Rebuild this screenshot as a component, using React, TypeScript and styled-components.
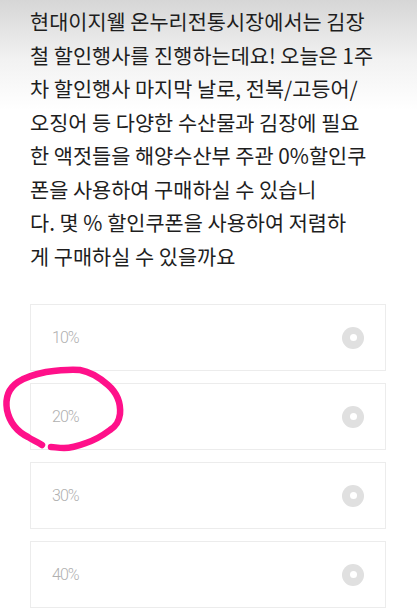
import React from "react";
import styled, { createGlobalStyle } from "styled-components";

const Global = createGlobalStyle`
  html, body {
    margin: 0;
    padding: 0;
    background: #ffffff;
  }
  body {
    font-family: "Noto Sans CJK KR", "Noto Sans", sans-serif;
  }
`;

const Page = styled.div`
  position: relative;
  width: 417px;
  height: 612px;
  overflow: hidden;
  background: linear-gradient(to bottom, #d6d6d6 0px, #f2f2f2 60px, #ffffff 110px);
  display: flex;
  flex-direction: column;
  padding: 5px 30px 0 30px;
  box-sizing: border-box;
`;

const Question = styled.p`
  margin: 0;
  font-family: "Noto Sans CJK KR", sans-serif;
  font-size: 20.8px;
  line-height: 33.5px;
  color: #1e1e1e;
  white-space: nowrap;
  letter-spacing: 0px;
`;

const Options = styled.div`
  margin-top: 31px;
  display: flex;
  flex-direction: column;
  gap: 12px;
  width: 356px;
`;

const Option = styled.div`
  height: 67px;
  box-sizing: border-box;
  border: 1px solid #ececec;
  background: #ffffff;
  display: flex;
  align-items: center;
  justify-content: space-between;
  padding: 0 21px 0 21px;
`;

const Label = styled.span`
  font-family: Roboto, "Noto Sans", sans-serif;
  font-weight: 300;
  font-size: 16px;
  letter-spacing: -1px;
  color: #b0b0b0;
`;

const Radio = styled.span`
  width: 22px;
  height: 22px;
  border-radius: 50%;
  background: #e0e0e0;
  display: flex;
  align-items: center;
  justify-content: center;
  &::after {
    content: "";
    width: 7px;
    height: 7px;
    border-radius: 50%;
    background: #ffffff;
  }
`;

const Scribble = styled.svg`
  position: absolute;
  left: 0;
  top: 0;
  pointer-events: none;
`;

const lines = [
  "현대이지웰 온누리전통시장에서는 김장",
  "철 할인행사를 진행하는데요! 오늘은 1주",
  "차 할인행사 마지막 날로, 전복/고등어/",
  "오징어 등 다양한 수산물과 김장에 필요",
  "한 액젓들을 해양수산부 주관 0%할인쿠",
  "폰을 사용하여 구매하실 수 있습니",
  "다. 몇 % 할인쿠폰을 사용하여 저렴하",
  "게 구매하실 수 있을까요",
];

const options = ["10%", "20%", "30%", "40%"];

export default function App() {
  return (
    <Page>
      <Global />
      <Question>
        {lines.map((l, i) => (
          <React.Fragment key={i}>
            {l}
            {i < lines.length - 1 && <br />}
          </React.Fragment>
        ))}
      </Question>
      <Options>
        {options.map((o) => (
          <Option key={o}>
            <Label>{o}</Label>
            <Radio />
          </Option>
        ))}
      </Options>
      <Scribble width="417" height="612" viewBox="0 0 417 612">
        <path
          d="M42 445 C36 441 32 440 28 437 C18 432 10 424 7 410 C5 398 9 388 18 382 C27 376 36 374 46 372 C60 370 70 369 80 370 C92 372 100 378 108 385 C116 392 121 402 120 414 C119 422 116 426 110 430 C102 436 95 440 86 443 C78 446 72 448 64 448 C58 448 54 447 51 447"
          fill="none"
          stroke="#ff108a"
          strokeWidth="6.5"
          strokeLinecap="round"
          strokeLinejoin="round"
        />
      </Scribble>
    </Page>
  );
}
